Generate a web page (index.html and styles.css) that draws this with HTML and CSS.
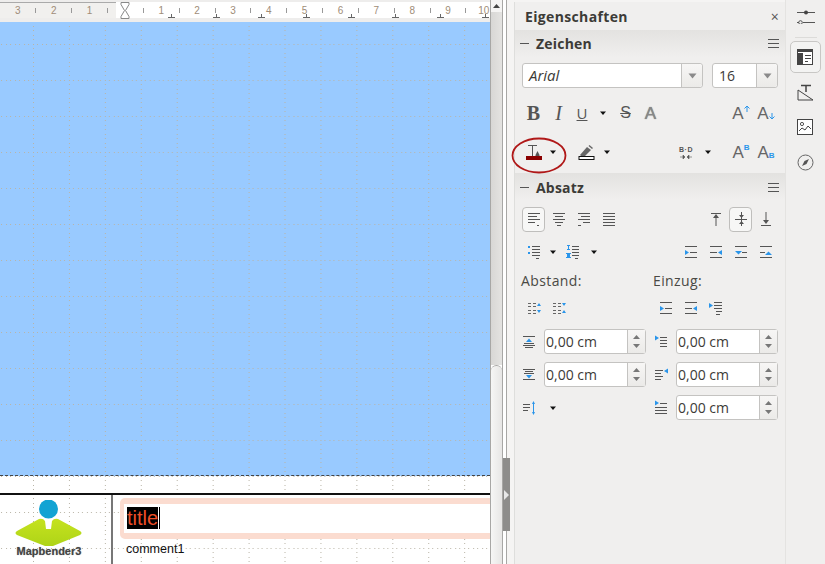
FILE: index.html
```html
<!DOCTYPE html>
<html lang="de">
<head>
<meta charset="utf-8">
<title>Eigenschaften</title>
<link rel="stylesheet" href="styles.css">
</head>
<body>
<svg class="defs" width="0" height="0" aria-hidden="true">
  <defs>
    <pattern id="grid" x="33" y="44" width="35.93" height="36" patternUnits="userSpaceOnUse">
      <g fill="#b9b4a6">
        <rect x="0" y="0" width="1" height="1"/><rect x="4" y="0" width="1" height="1"/><rect x="9" y="0" width="1" height="1"/><rect x="13" y="0" width="1" height="1"/><rect x="18" y="0" width="1" height="1"/><rect x="22" y="0" width="1" height="1"/><rect x="27" y="0" width="1" height="1"/><rect x="31" y="0" width="1" height="1"/>
        <rect x="0" y="4" width="1" height="1"/><rect x="0" y="9" width="1" height="1"/><rect x="0" y="13" width="1" height="1"/><rect x="0" y="18" width="1" height="1"/><rect x="0" y="22" width="1" height="1"/><rect x="0" y="27" width="1" height="1"/><rect x="0" y="31" width="1" height="1"/>
      </g>
    </pattern>
    <symbol id="al" viewBox="0 0 16 16"><path d="M2 2.500h12M2 5.500h9M2 8.500h12M2 11.500h7M11 14.500h2" stroke="#555" fill="none"/></symbol>
    <symbol id="ac" viewBox="0 0 16 16"><path d="M2 2.500h12M4 5.500h8M2 8.500h12M4 11.500h8M6 14.500h4" stroke="#555" fill="none"/></symbol>
    <symbol id="ar" viewBox="0 0 16 16"><path d="M2 2.500h12M5 5.500h9M2 8.500h12M7 11.500h7M2 14.500h3" stroke="#555" fill="none"/></symbol>
    <symbol id="aj" viewBox="0 0 16 16"><path d="M2 2.500h12M2 5.500h12M2 8.500h12M2 11.500h12M2 14.500h12" stroke="#555" fill="none"/></symbol>
    <symbol id="caret" viewBox="0 0 8 8"><path d="M1 2.500h6L4 6z" fill="#111"/></symbol>
    <symbol id="ind-l" viewBox="0 0 16 16"><path d="M2 2.500h12M7 8.500h7M2 13.500h12" stroke="#555" fill="none"/><path d="M2 6l4 2.500-4 2.500z" fill="#2a95ea"/></symbol>
    <symbol id="ind-r" viewBox="0 0 16 16"><path d="M2 2.500h12M2 8.500h7M2 13.500h12" stroke="#555" fill="none"/><path d="M14 6l-4 2.500 4 2.500z" fill="#2a95ea"/></symbol>
    <symbol id="ind-d" viewBox="0 0 16 16"><path d="M2 2.500h12M9 8.500h5M2 13.500h12" stroke="#555" fill="none"/><path d="M2 7h7l-3.500 3.500z" fill="#2a95ea"/></symbol>
    <symbol id="ind-u" viewBox="0 0 16 16"><path d="M2 2.500h12M2 8.500h5M2 13.500h12" stroke="#555" fill="none"/><path d="M7 11h7l-3.500-3.500z" fill="#2a95ea"/></symbol>
    <symbol id="hang" viewBox="0 0 16 16"><path d="M6 2.500h8M6 5.500h8M6 8.500h8M8 11.500h6M8 14.500h4" stroke="#555" fill="none"/><path d="M1 3l4 2.500-4 2.500z" fill="#2a95ea"/></symbol>
    <symbol id="sp-inc" viewBox="0 0 16 16"><path d="M2 3.500h3M7 3.500h3M2 6.500h3M7 6.500h3M2 10.500h3M7 10.500h3M2 13.500h3M7 13.500h3" stroke="#666" fill="none"/><path d="M11 6h4l-2-3zM11 10h4l-2 3z" fill="#2a95ea"/></symbol>
    <symbol id="sp-dec" viewBox="0 0 16 16"><path d="M2 3.500h3M7 3.500h3M2 6.500h3M7 6.500h3M2 10.500h3M7 10.500h3M2 13.500h3M7 13.500h3" stroke="#666" fill="none"/><path d="M11 3h4l-2 3zM11 13h4l-2-3z" fill="#2a95ea"/></symbol>
    <symbol id="sup" viewBox="0 0 16 16"><path d="M2 2.500h12M2 11.500h12M4 13.500h8" stroke="#555" fill="none"/><path d="M5 8h6L8 4.500z" fill="#2a95ea"/><path d="M3 9.500h10" stroke="#555"/></symbol>
    <symbol id="sub" viewBox="0 0 16 16"><path d="M2 2.500h12M4 4.500h8M2 12.500h12" stroke="#555" fill="none"/><path d="M3 6.500h10" stroke="#555"/><path d="M5 8h6l-3 3.500z" fill="#2a95ea"/></symbol>
    <symbol id="il" viewBox="0 0 16 16"><path d="M7 3.500h7M7 6.500h7M7 9.500h7M7 12.500h7" stroke="#555" fill="none"/><path d="M2 1.500l4 2.500-4 2.500z" fill="#2a95ea"/></symbol>
    <symbol id="ir" viewBox="0 0 16 16"><path d="M2 3.500h8M2 6.500h6M2 9.500h8M2 12.500h6" stroke="#555" fill="none"/><path d="M15 1.500l-4 2.500 4 2.500z" fill="#2a95ea"/></symbol>
    <symbol id="if" viewBox="0 0 16 16"><path d="M7 3.500h7M2 7.500h12M2 10.500h12M2 13.500h12" stroke="#555" fill="none"/><path d="M2 .5l4 2.500-4 2.500z" fill="#2a95ea"/></symbol>
    <symbol id="lsp" viewBox="0 0 16 16"><path d="M2 4.500h7M2 7.500h7M2 10.500h5" stroke="#555" fill="none"/><path d="M12.500 2v12" stroke="#2a95ea" fill="none"/><path d="M11 4h3l-1.500-3zM11 12h3l-1.500 3z" fill="#2a95ea"/></symbol>
    <symbol id="bullets" viewBox="0 0 16 16"><path d="M6 2.500h8M6 5.500h8M6 8.500h8M6 11.500h8M10 14.500h3" stroke="#555" fill="none"/><path d="M2 2h2v2H2zM2 8h2v2H2z" fill="#2a95ea"/></symbol>
    <symbol id="numbers" viewBox="0 0 16 16"><path d="M7 2.500h7M7 5.500h7M7 8.500h7M7 11.500h7M10 14.500h3" stroke="#555" fill="none"/><path d="M2 1h3v1h-1v3h1v1H2V5h1V2H2zM1 9h5v1H5v3h1v1H1v-1h1v-3H1z" fill="#2a95ea"/></symbol>
  </defs>
</svg>

<div class="app">
  <main class="editor">
    <div class="ruler">
      <div class="ruler-left"></div>
      <div class="ruler-scale">
        <span class="cell"></span><span class="cell">3</span><span class="cell tick"></span><span class="cell">2</span><span class="cell tick"></span><span class="cell">1</span><span class="cell tick"></span>
        <span class="cell marker"><svg width="10" height="17" viewBox="0 0 10 17"><path d="M1 .5h8v2L5.500 8.500 9 14.500v2H1v-2L4.500 8.500 1 2.500z" fill="#fff" stroke="#888"/></svg></span>
        <span class="cell tick"></span><span class="cell">1</span><span class="cell tick"></span><span class="cell">2</span><span class="cell tick"></span><span class="cell">3</span><span class="cell tick"></span><span class="cell">4</span><span class="cell tick"></span><span class="cell">5</span><span class="cell tick"></span><span class="cell">6</span><span class="cell tick"></span><span class="cell">7</span><span class="cell tick"></span><span class="cell">8</span><span class="cell tick"></span><span class="cell">9</span><span class="cell tick"></span><span class="cell">10</span>
      </div>
      <svg class="tabstops" width="490" height="4" viewBox="0 0 490 4"><path d="M171.500 0v3M168 3.500h7M216.500 0v3M213 3.500h7M261.500 0v3M258 3.500h7M306.500 0v3M303 3.500h7M351.500 0v3M348 3.500h7M395.500 0v3M392 3.500h7M440.500 0v3M437 3.500h7M485.500 0v3M482 3.500h7" stroke="#666" fill="none"/></svg>
    </div>
    <div class="page">
      <div class="master"></div>
      <svg class="gridlines" width="490" height="542" viewBox="0 22 490 542"><rect x="0" y="22" width="490" height="542" fill="url(#grid)"/></svg>
      <div class="footer">
        <div class="logo">
          <svg width="70" height="46" viewBox="0 0 70 46"><defs><linearGradient id="lime" x1="0" y1="0" x2="0" y2="1"><stop offset="0" stop-color="#c5e21f"/><stop offset="1" stop-color="#aed417"/></linearGradient></defs>
            <path d="M25 19 L3 31 Q0 33 3 35 L31 46 Q35 47 39 46 L66 35 Q69 33 66 31 L44 19 Q40 18 38 21 L37 29 H32 L31 21 Q29 18 25 19z" fill="url(#lime)"/>
            <path d="M32 15h5v14h-5z" fill="#fff"/>
            <circle cx="34.500" cy="9" r="9.500" fill="#12a3d3"/>
          </svg>
          <div class="logo-name">Mapbender3</div>
        </div>
        <div class="fields">
          <div class="title-box"><span class="title-sel">title</span><span class="cursor"></span></div>
          <div class="comment">comment1</div>
        </div>
      </div>
    </div>
  </main>

  <div class="vscroll">
    <div class="vs-cap"><svg width="9" height="6" viewBox="0 0 9 6"><path d="M1 5h7L4.500 1z" fill="#444"/></svg></div>
    <div class="vs-track"></div>
    <div class="vs-thumb"></div>
  </div>

  <div class="splitter">
    <div class="split-handle"><svg width="7" height="10" viewBox="0 0 7 10"><path d="M1 0v10l5-5z" fill="#e8e8e8"/></svg></div>
  </div>

  <aside class="sidebar">
    <div class="side-title"><span>Eigenschaften</span><span class="close">×</span></div>

    <div class="deck-head"><span class="minus"></span><span class="deck-name">Zeichen</span>
      <svg class="menu" width="11" height="9" viewBox="0 0 11 9"><path d="M0 .5h11M0 4.500h11M0 8.500h11" stroke="#555" fill="none"/></svg></div>

    <div class="combos">
      <div class="combo wide"><span class="combo-text italic">Arial</span><span class="combo-btn"><svg width="9" height="6" viewBox="0 0 9 6"><path d="M.5.500h8L4.500 5.500z" fill="#8a8a8a"/></svg></span></div>
      <div class="combo narrow"><span class="combo-text">16</span><span class="combo-btn"><svg width="9" height="6" viewBox="0 0 9 6"><path d="M.5.500h8L4.500 5.500z" fill="#8a8a8a"/></svg></span></div>
    </div>

    <div class="row row-a">
      <span class="btn"><b class="glyph-b">B</b></span>
      <span class="btn"><i class="glyph-i">I</i></span>
      <span class="btn w22"><span class="glyph-u">U</span></span>
      <span class="btn w20"><svg width="8" height="8"><use href="#caret"/></svg></span>
      <span class="btn"><span class="glyph-s">S</span></span>
      <span class="btn"><span class="glyph-a">A</span></span>
      <span class="push"></span>
      <span class="btn"><span class="big-a">A<svg class="mini" width="6" height="7" viewBox="0 0 6 7"><path d="M3 7V1M.5 3.500L3 1l2.500 2.500" stroke="#2a95ea" fill="none"/></svg></span></span>
      <span class="btn"><span class="big-a">A<svg class="mini low" width="6" height="7" viewBox="0 0 6 7"><path d="M3 0v6M.5 3.500L3 6l2.500-2.500" stroke="#2a95ea" fill="none"/></svg></span></span>
    </div>

    <div class="row row-b">
      <span class="btn"><svg width="18" height="17" viewBox="0 0 18 17"><path d="M3 1.500h9M7.500 1.500V12" stroke="#555" fill="none"/><path d="M12.500 7l2 4v1h-4v-1z" fill="#555"/><rect x="1" y="12" width="16" height="4" fill="#8b0000"/></svg></span>
      <span class="btn w14"><svg width="8" height="8"><use href="#caret"/></svg></span>
      <span class="gap14"></span>
      <span class="btn w24"><svg width="17" height="17" viewBox="0 0 17 17"><path d="M2 11L9 3l4 3-6 6H3z" fill="#666"/><path d="M11 1.500l3.500 3" stroke="#666" stroke-width="1.500"/><rect x="1" y="12.500" width="15" height="3" fill="#fff" stroke="#111"/></svg></span>
      <span class="btn w18"><svg width="8" height="8"><use href="#caret"/></svg></span>
      <span class="push"></span>
      <span class="btn w24"><span class="spacing">B·D<svg width="12" height="4" viewBox="0 0 12 4"><path d="M0 2h4M8 2h4M3 0L5 2 3 4zM9 0L7 2 9 4z" fill="#555" stroke="#555" stroke-width=".6"/></svg></span></span>
      <span class="btn w20"><svg width="8" height="8"><use href="#caret"/></svg></span>
      <span class="gap12"></span>
      <span class="btn"><span class="big-a">A<small class="mini-b">B</small></span></span>
      <span class="btn"><span class="big-a">A<small class="mini-b low">B</small></span></span>
    </div>

    <div class="deck-head second"><span class="minus"></span><span class="deck-name">Absatz</span>
      <svg class="menu" width="11" height="9" viewBox="0 0 11 9"><path d="M0 .5h11M0 4.500h11M0 8.500h11" stroke="#555" fill="none"/></svg></div>

    <div class="row row-c">
      <span class="btn on"><svg width="16" height="16"><use href="#al"/></svg></span>
      <span class="btn"><svg width="16" height="16"><use href="#ac"/></svg></span>
      <span class="btn"><svg width="16" height="16"><use href="#ar"/></svg></span>
      <span class="btn"><svg width="16" height="16"><use href="#aj"/></svg></span>
      <span class="push"></span>
      <span class="btn"><svg width="16" height="16" viewBox="0 0 16 16"><path d="M3 2.500h10M8 5v10" stroke="#555" fill="none"/><path d="M5 7l3-4 3 4z" fill="#555"/></svg></span>
      <span class="btn on"><svg width="16" height="16" viewBox="0 0 16 16"><path d="M2 8.500h12M8.500 1v14" stroke="#555" fill="none"/><path d="M6 4l2.500 3L11 4zM6 13l2.500-3L11 13z" fill="#555"/></svg></span>
      <span class="btn"><svg width="16" height="16" viewBox="0 0 16 16"><path d="M3 14.500h10M8 1v10" stroke="#555" fill="none"/><path d="M5 9l3 4 3-4z" fill="#555"/></svg></span>
    </div>

    <div class="row row-d">
      <span class="btn"><svg width="16" height="16"><use href="#bullets"/></svg></span>
      <span class="btn w14"><svg width="8" height="8"><use href="#caret"/></svg></span>
      <span class="gap2"></span>
      <span class="btn w24"><svg width="16" height="16"><use href="#numbers"/></svg></span>
      <span class="btn w18"><svg width="8" height="8"><use href="#caret"/></svg></span>
      <span class="push"></span>
      <span class="btn"><svg width="16" height="16"><use href="#ind-l"/></svg></span>
      <span class="btn"><svg width="16" height="16"><use href="#ind-r"/></svg></span>
      <span class="btn"><svg width="16" height="16"><use href="#ind-d"/></svg></span>
      <span class="btn"><svg width="16" height="16"><use href="#ind-u"/></svg></span>
    </div>

    <div class="labels"><span class="lab-a">Abstand:</span><span>Einzug:</span></div>

    <div class="row row-e">
      <span class="btn"><svg width="16" height="16"><use href="#sp-inc"/></svg></span>
      <span class="btn"><svg width="16" height="16"><use href="#sp-dec"/></svg></span>
      <span class="gap-mid"></span>
      <span class="btn"><svg width="16" height="16"><use href="#ind-l"/></svg></span>
      <span class="btn"><svg width="16" height="16"><use href="#ind-r"/></svg></span>
      <span class="btn"><svg width="16" height="16"><use href="#hang"/></svg></span>
    </div>

    <div class="spin-grid">
      <span class="spin-icon"><svg width="16" height="16"><use href="#sup"/></svg></span>
      <div class="spin"><span class="spin-val">0,00 cm</span><span class="spin-btn"><svg width="7" height="4" viewBox="0 0 7 4"><path d="M0 4h7L3.500 0z" fill="#777"/></svg><svg width="7" height="4" viewBox="0 0 7 4"><path d="M0 0h7L3.500 4z" fill="#777"/></svg></span></div>
      <span class="spin-icon"><svg width="16" height="16"><use href="#il"/></svg></span>
      <div class="spin"><span class="spin-val">0,00 cm</span><span class="spin-btn"><svg width="7" height="4" viewBox="0 0 7 4"><path d="M0 4h7L3.500 0z" fill="#777"/></svg><svg width="7" height="4" viewBox="0 0 7 4"><path d="M0 0h7L3.500 4z" fill="#777"/></svg></span></div>

      <span class="spin-icon"><svg width="16" height="16"><use href="#sub"/></svg></span>
      <div class="spin"><span class="spin-val">0,00 cm</span><span class="spin-btn"><svg width="7" height="4" viewBox="0 0 7 4"><path d="M0 4h7L3.500 0z" fill="#777"/></svg><svg width="7" height="4" viewBox="0 0 7 4"><path d="M0 0h7L3.500 4z" fill="#777"/></svg></span></div>
      <span class="spin-icon"><svg width="16" height="16"><use href="#ir"/></svg></span>
      <div class="spin"><span class="spin-val">0,00 cm</span><span class="spin-btn"><svg width="7" height="4" viewBox="0 0 7 4"><path d="M0 4h7L3.500 0z" fill="#777"/></svg><svg width="7" height="4" viewBox="0 0 7 4"><path d="M0 0h7L3.500 4z" fill="#777"/></svg></span></div>

      <span class="spin-icon"><svg width="16" height="16"><use href="#lsp"/></svg></span>
      <span class="spin-caret"><svg width="8" height="8"><use href="#caret"/></svg></span>
      <span class="spin-icon"><svg width="16" height="16"><use href="#if"/></svg></span>
      <div class="spin"><span class="spin-val">0,00 cm</span><span class="spin-btn"><svg width="7" height="4" viewBox="0 0 7 4"><path d="M0 4h7L3.500 0z" fill="#777"/></svg><svg width="7" height="4" viewBox="0 0 7 4"><path d="M0 0h7L3.500 4z" fill="#777"/></svg></span></div>
    </div>

    <svg class="annotation" width="56" height="37" viewBox="0 0 56 37"><ellipse cx="28" cy="18.500" rx="26.500" ry="17" fill="none" stroke="#b01818" stroke-width="1.800"/></svg>
  </aside>

  <nav class="tabbar">
    <span class="tab tab-first"><svg width="18" height="14" viewBox="0 0 18 14"><path d="M0 2.500h18M0 12.500h2M6 12.500h12" stroke="#555" fill="none"/><circle cx="9" cy="2.500" r="2" fill="#444"/><circle cx="3.500" cy="12.500" r="1.800" fill="none" stroke="#555"/></svg></span>
    <span class="tab-sep"></span>
    <span class="tab active"><svg width="17" height="17" viewBox="0 0 17 17"><rect x=".5" y=".5" width="15" height="15" fill="#fff" stroke="#444"/><rect width="16" height="3" fill="#444"/><rect x="1" y="4" width="5" height="11" fill="#444"/><path d="M8 6.500h6M8 9.500h6M8 12.500h3" stroke="#444" fill="none"/></svg></span>
    <span class="tab"><svg width="17" height="17" viewBox="0 0 17 17"><path d="M4 1.500h10M9 1.500V8" stroke="#444" stroke-width="1.500" fill="none"/><path d="M1 6v10h15z" fill="none" stroke="#444"/></svg></span>
    <span class="tab"><svg width="17" height="17" viewBox="0 0 17 17"><rect x=".5" y=".5" width="15" height="15" fill="#fff" stroke="#444"/><circle cx="5" cy="5" r="1.600" fill="none" stroke="#555"/><path d="M2 12l3-3 3 2 3-4 3 3" stroke="#444" fill="none"/></svg></span>
    <span class="tab"><svg width="17" height="17" viewBox="0 0 17 17"><circle cx="8.500" cy="8.500" r="7.500" fill="none" stroke="#666"/><path d="M12 5L9.500 10 5 12l2.500-5z" fill="#555"/></svg></span>
  </nav>
</div>
</body>
</html>
```
FILE: styles.css
```css
* { box-sizing: border-box; }
html, body { margin: 0; padding: 0; height: 100%; overflow: hidden; }
body { font-family: "Open Sans", "Liberation Sans", sans-serif; color: #3c3b37; background: #f0efee; }
svg { display: block; flex: none; }
.defs { position: absolute; }

.app { display: flex; width: 825px; height: 564px; }

/* Editor */
.editor { width: 490px; display: flex; flex-direction: column; overflow: hidden; }
.ruler { position: relative; height: 22px; background: #eeedec; padding-top: 2px; flex: none; overflow: hidden; }
.ruler-left { position: absolute; left: 0; top: 2px; width: 125px; height: 16px; background: #f1f0ee; border-top: 1px solid #aaa; }
.ruler-scale { position: relative; display: flex; height: 16px; background: linear-gradient(90deg, transparent 125px, #fff 125px); margin-left: -9px; width: 510px; }
.cell { width: 17.93px; flex: none; display: flex; align-items: center; justify-content: center; font-size: 10px; color: #a08d78; font-family: "Liberation Sans", sans-serif; position: relative; }
.tick::before { content: ""; width: 1px; height: 5px; background: #999; }
.tabstops { position: absolute; left: 0; top: 14px; }

.page { position: relative; flex: 1; background: #fff; display: flex; flex-direction: column; }
.master { height: 454px; background: #99caff; border-bottom: 1px dashed #444; flex: none; }
.gridlines { position: absolute; left: 0; top: 0; }
.footer { position: relative; margin-top: 17px; border-top: 2px solid #111; flex: 1; display: flex; }
.logo { width: 113px; border-right: 2px solid #777; flex: none; display: flex; flex-direction: column; align-items: center; padding: 5px 28px 0 0; }
.logo svg { margin-left: 14px; }
.logo-name { font: bold 11px/13px "Liberation Sans", sans-serif; color: #444; margin: -1px 0 0 15px; text-shadow: 0 0 1px #999; }
.fields { flex: 1; padding: 3px 0 0 7px; min-width: 0; }
.title-box { height: 41px; width: 380px; border: solid #fbdcd0; border-width: 6px 4px; border-radius: 5px; background: #fff; padding: 3px 0 0 3px; display: flex; }
.title-sel { background: #000; color: #ef4f28; font: 20px/22px "Liberation Sans", sans-serif; height: 22px; width: 31px; }
.cursor { width: 1px; height: 22px; background: #000; margin-left: 1px; }
.comment { font: 12.500px/15px "Liberation Sans", sans-serif; color: #111; margin: 3px 0 0 6px; }

/* Scrollbar and splitter */
.vscroll { width: 13px; background: #fff; display: flex; flex-direction: column; border-left: 1px solid #a8a7a5; border-right: 1px solid #a8a7a5; flex: none; }
.vs-cap { height: 12px; display: flex; align-items: center; justify-content: center; background: #f5f4f3; flex: none; }
.vs-track { height: 353px; background: linear-gradient(90deg, #d8d7d5, #e4e3e1); flex: none; }
.vs-thumb { flex: 1; background: linear-gradient(90deg, #f6f6f5, #e7e6e5); border-top: 1px solid #a8a7a5; border-radius: 6px 6px 0 0; }
.splitter { width: 7px; background: linear-gradient(90deg, #fff 3px, #a8a7a5 3px, #a8a7a5 4px, #f5f4f3 4px); display: flex; flex-direction: column; flex: none; padding-top: 458px; }
.split-handle { height: 73px; background: #8e8d8b; display: flex; align-items: center; justify-content: center; }

/* Sidebar */
.sidebar { position: relative; width: 275px; flex: none; padding-left: 4px; background: linear-gradient(90deg, #f5f4f3 4px, #dededc 4px, #dededc 5px, #f0efee 5px); border-top: 2px solid #f5f4f3; }
.side-title { height: 28px; display: flex; justify-content: space-between; align-items: center; padding: 0 6px 0 11px; font-size: 14px; font-weight: 700; letter-spacing: .35px; color: #3c3b37; }
.close { font-size: 14px; font-weight: 400; color: #555; }
.deck-head { height: 27px; background: linear-gradient(#e3e2e0, #f0efee); display: flex; align-items: center; padding: 0 6px 0 5px; font-size: 14px; font-weight: 700; letter-spacing: .2px; margin-left: 1px; }
.deck-head.second { margin-top: 8px; padding-top: 1px; }
.minus { width: 9px; height: 1px; background: #555; margin-right: 7px; }
.deck-name { flex: 1; }

.combos { display: flex; gap: 9px; padding: 6px 0 0 8px; }
.combo { height: 25px; display: flex; border: 1px solid #c4c3c1; border-radius: 3px; background: #fff; }
.combo.wide { width: 181px; }
.combo.narrow { width: 66px; }
.combo-text { flex: 1; padding-left: 6px; font-size: 14px; line-height: 23px; color: #3c3b37; }
.italic { font-style: italic; font-size: 15px; }
.combo-btn { width: 21px; background: linear-gradient(#f7f6f5, #ebeae8); border-left: 1px solid #c4c3c1; border-radius: 0 3px 3px 0; display: flex; align-items: center; justify-content: center; }

.row { display: flex; align-items: center; padding: 0 5px 0 7px; height: 26px; }
.row-a { margin-top: 12px; }
.row-b { margin-top: 13px; }
.row-c { margin-top: 6px; padding-right: 7px; }
.row-d { margin-top: 7px; padding-right: 7px; }
.row-e { margin-top: 2px; height: 26px; }
.btn { width: 25px; height: 25px; flex: none; display: flex; align-items: center; justify-content: center; }
.btn.w14 { width: 14px; }
.btn.w18 { width: 18px; }
.btn.w20 { width: 20px; }
.btn.w22 { width: 22px; }
.btn.w24 { width: 24px; }
.btn.on { width: 23px; margin: 0 1px; background: #f7f7f6; border: 1px solid #bfbebc; border-radius: 4px; }
.push { flex: 1; }
.gap14 { width: 14px; flex: none; }
.gap12 { width: 12px; flex: none; }
.gap2 { width: 1px; flex: none; }
.gap-mid { width: 82px; flex: none; }

.glyph-b { font: bold 20px/1 "Liberation Serif", serif; color: #555; }
.glyph-i { font: italic 20px/1 "Liberation Serif", serif; color: #555; }
.glyph-u { font: 15px/1 "Open Sans", sans-serif; color: #555; text-decoration: underline; }
.glyph-s { font: 16px/1 "Liberation Sans", sans-serif; color: #555; text-decoration: line-through; }
.glyph-a { font: 17px/1 "Liberation Sans", sans-serif; color: #888; text-shadow: 0 0 1px #666; }
.big-a { font: 17px/1 "Liberation Sans", sans-serif; color: #666; display: flex; align-items: flex-start; margin-left: -3px; }
.mini { margin-top: 0; }
.mini.low { margin-top: 8px; }
.mini-b { font-size: 8px; font-weight: 700; line-height: 8px; color: #2a95ea; }
.mini-b.low { margin-top: 8px; }
.spacing { font: bold 7px/8px "Liberation Sans", sans-serif; color: #555; letter-spacing: .5px; display: flex; flex-direction: column; align-items: center; gap: 1px; }

.labels { display: flex; height: 24px; margin-top: 4px; padding-left: 7px; font-size: 14px; letter-spacing: .4px; line-height: 24px; color: #4a4944; }
.lab-a { width: 132px; }

.spin-grid { display: grid; grid-template-columns: 30px 102px 30px 102px; grid-auto-rows: 25px; row-gap: 8px; margin-top: 8px; }
.spin-icon { display: flex; align-items: center; justify-content: center; }
.spin-caret { display: flex; align-items: center; padding-left: 5px; }
.spin { display: flex; height: 25px; background: #fff; border: 1px solid #c4c3c1; border-radius: 3px; width: 102px; }
.spin-val { flex: 1; font-size: 14px; line-height: 23px; padding-left: 1px; color: #3c3b37; }
.spin-btn { width: 18px; background: linear-gradient(#f7f6f5, #ebeae8); border-left: 1px solid #c4c3c1; display: flex; flex-direction: column; align-items: center; justify-content: center; gap: 5px; }

.annotation { position: absolute; left: 1px; top: 135px; }

/* Tab bar */
.tabbar { flex: 1; background: #f0efee; border-left: 1px solid #e4e3e1; display: flex; flex-direction: column; align-items: center; }
.tab { width: 31px; height: 35px; display: flex; align-items: center; justify-content: center; flex: none; }
.tab-first { height: 34px; }
.tab-sep { width: 22px; height: 1px; background: #dcdbd9; margin: 3px 0 3px; flex: none; }
.tab.active { height: 32px; margin-bottom: 2px; background: #f3f3f2; border: 1px solid #c8c7c5; border-radius: 5px; }
```
